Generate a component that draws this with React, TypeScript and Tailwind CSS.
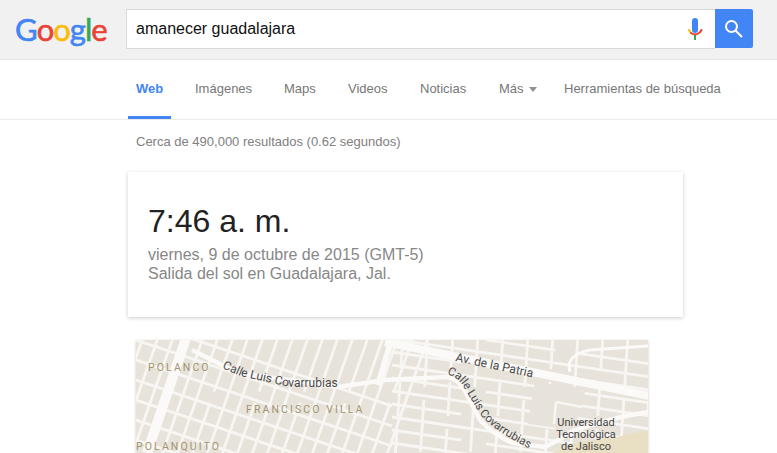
import React from 'react';

const NAV_ITEMS = [
  { label: 'Imágenes', width: 'w-[89px]' },
  { label: 'Maps', width: 'w-[64px]' },
  { label: 'Videos', width: 'w-[72px]' },
  { label: 'Noticias', width: 'w-[79px]' },
];

// minor streets of the map, in page coordinates
const range = (from: number, to: number, step: number) => {
  const out: number[] = [];
  for (let v = from; v <= to; v += step) out.push(v);
  return out;
};

const MapView = () => {
  const leftDiagonals = range(100, 385, 15);
  const leftCross = range(318, 470, 20);
  const rightVerticals = range(395, 660, 25);
  const rightCross = range(326, 470, 13);

  return (
    <svg viewBox="136 340 512 113" className="block w-[512px] h-[113px]">
      <rect x="136" y="340" width="512" height="113" fill="#e7e3db" />

      <g stroke="#f8f6f3" strokeWidth="2.8" fill="none">
        {leftDiagonals.map((x, i) => (
          <line key={x} x1={x + 44} y1="335" x2={x} y2="460" strokeDasharray={i % 3 === 0 ? '60 12' : undefined} />
        ))}
        {leftCross.map((y) => (
          <line key={y} x1="130" y1={y} x2="392" y2={y + 88} />
        ))}
        {rightVerticals.map((x, i) => (
          <line key={x} x1={x + 8} y1="335" x2={x} y2="460" strokeDasharray={i % 2 === 0 ? '34 13' : '52 13'} />
        ))}
        {rightCross.map((y, i) => (
          <line key={y} x1="392" y1={y} x2="650" y2={y + 38} strokeDasharray={i % 2 === 0 ? '70 25' : undefined} />
        ))}
      </g>

      {/* block the university sits on */}
      <polygon points="535,381 585,392 580,412 572,430 528,424" fill="#e7e3db" />
      <path d="M556 402 L582 407 M556 402 L554 424" stroke="#f8f6f3" strokeWidth="2.5" fill="none" />
      <polygon points="553,453 573,443 617,437 648,430 648,453" fill="#e9dfc3" />

      <g stroke="#fbfaf8" fill="none" strokeLinejoin="round">
        <line x1="186" y1="338" x2="147" y2="453" strokeWidth="10" />
        <line x1="392" y1="338" x2="378" y2="385" strokeWidth="6" />
        <path d="M192 350 L238 373 L338 387 L385 380 L447 377 Q458 379 464 389 L480 420 Q495 436 513 443 L545 447 Q560 440 573 431 Q610 418 648 412" strokeWidth="4.5" />
        <line x1="385" y1="342" x2="650" y2="396" strokeWidth="8" />
        <path d="M570 372 Q565 355 590 350 L648 346" strokeWidth="3" />
      </g>

      <g fontFamily="Roboto, sans-serif" fontSize="10.5" fill="#a3936f" letterSpacing="2.1">
        <text x="148" y="371">POLANCO</text>
        <text x="246" y="413">FRANCISCO VILLA</text>
        <text x="136" y="450">POLANQUITO</text>
      </g>

      <defs>
        <path id="calle-a" d="M222 368 L240 376 L290 387 L345 387" />
        <path id="calle-b" d="M447 374 Q460 378 466 391 L480 414 Q495 434 550 458" />
        <path id="avenida" d="M455 361 L545 380" />
      </defs>
      <g fontFamily="Roboto, sans-serif" fill="#4a4a4a">
        <text fontSize="12"><textPath href="#calle-a">Calle Luis Covarrubias</textPath></text>
        <text fontSize="11.5"><textPath href="#calle-b">Calle Luis Covarrubias</textPath></text>
        <text fontSize="12"><textPath href="#avenida">Av. de la Patria</textPath></text>
      </g>
      <g fontFamily="Roboto, sans-serif" fontSize="11" fill="#444444" textAnchor="middle">
        <text x="586" y="426">Universidad</text>
        <text x="586" y="438">Tecnológica</text>
        <text x="586" y="450">de Jalisco</text>
      </g>
    </svg>
  );
};

const MicIcon = () => (
  <svg width="16" height="22" viewBox="0 0 16 22" fill="none">
    <rect x="5" y="0" width="6" height="15" rx="3" fill="#4285f4" />
    <path d="M2 12 Q3 14 4 15" stroke="#fbbc05" strokeWidth="2" strokeLinecap="round" />
    <path d="M4 15 Q8 18 12 15 Q13.5 14 14.5 12" stroke="#ea4335" strokeWidth="2" strokeLinecap="round" />
    <rect x="7" y="17" width="2" height="5" fill="#34a853" />
  </svg>
);

const App = () => {
  return (
    <div className="w-[777px] h-[453px] overflow-hidden bg-white font-['Liberation_Sans',Arial,sans-serif]">
      <header className="flex h-[60px] bg-[#f1f1f1] border-b border-[#e5e5e5] pt-[9px]">
        <div className="w-[126px] pl-[15px] h-[40px] flex items-center font-['Lato',sans-serif] text-[31px] tracking-[-1px] leading-none [-webkit-text-stroke:0.6px_currentColor]">
          <span className="text-[#4285f4]">G</span>
          <span className="text-[#ea4335]">o</span>
          <span className="text-[#fbbc05]">o</span>
          <span className="text-[#4285f4]">g</span>
          <span className="text-[#34a853]">l</span>
          <span className="text-[#ea4335]">e</span>
        </div>
        <div className="w-[589px] h-[40px] flex items-center justify-between bg-white border border-[#d9d9d9] border-r-0 pl-[9px] pr-[12px] text-[16px] text-[#111]">
          <span>amanecer guadalajara</span>
          <MicIcon />
        </div>
        <div className="w-[38px] h-[39px] bg-[#4285f4] rounded-r-[2px] flex items-center justify-center">
          <svg width="20" height="20" viewBox="0 0 20 20" fill="none" stroke="#fff" strokeWidth="2">
            <circle cx="7.5" cy="7.5" r="5.5" />
            <line x1="11.5" y1="11.5" x2="18" y2="18" />
          </svg>
        </div>
      </header>

      <nav className="flex h-[60px] border-b border-[#ebebeb] text-[13px] text-[#777] pl-[128px]">
        <div className="w-[67px] h-[59px] relative pl-[8px] pt-[21px] leading-[16px]">
          <span className="font-bold text-[#4285f4]">Web</span>
          <div className="absolute left-0 bottom-0 w-[43px] h-[3px] bg-[#4285f4]" />
        </div>
        {NAV_ITEMS.map((item) => (
          <div key={item.label} className={`${item.width} pt-[21px] leading-[16px]`}>
            {item.label}
          </div>
        ))}
        <div className="w-[65px] pt-[21px] leading-[16px] flex items-start">
          <span>Más</span>
          <span className="ml-[5px] mt-[6px] border-x-[4px] border-x-transparent border-t-[5px] border-t-[#909090]" />
        </div>
        <div className="pt-[21px] leading-[16px]">Herramientas de búsqueda</div>
      </nav>

      <div className="pl-[136px] pt-[14px] text-[13px] leading-[16px] text-[#808080]">
        Cerca de 490,000 resultados (0.62 segundos)
      </div>

      <div className="ml-[128px] mt-[22px] w-[555px] h-[145px] bg-white shadow-[0_1px_4px_rgba(0,0,0,0.2)] pl-[20px] pt-[29px]">
        <div className="text-[32px] leading-[40px] text-[#222]">7:46 a. m.</div>
        <div className="mt-[4px] text-[16px] leading-[19px] text-[#878787]">
          <div>viernes, 9 de octubre de 2015 (GMT-5)</div>
          <div>Salida del sol en Guadalajara, Jal.</div>
        </div>
      </div>

      <div className="ml-[136px] mt-[23px] w-[512px] shadow-[0_1px_3px_rgba(0,0,0,0.2)]">
        <MapView />
      </div>
    </div>
  );
};

export default App;
